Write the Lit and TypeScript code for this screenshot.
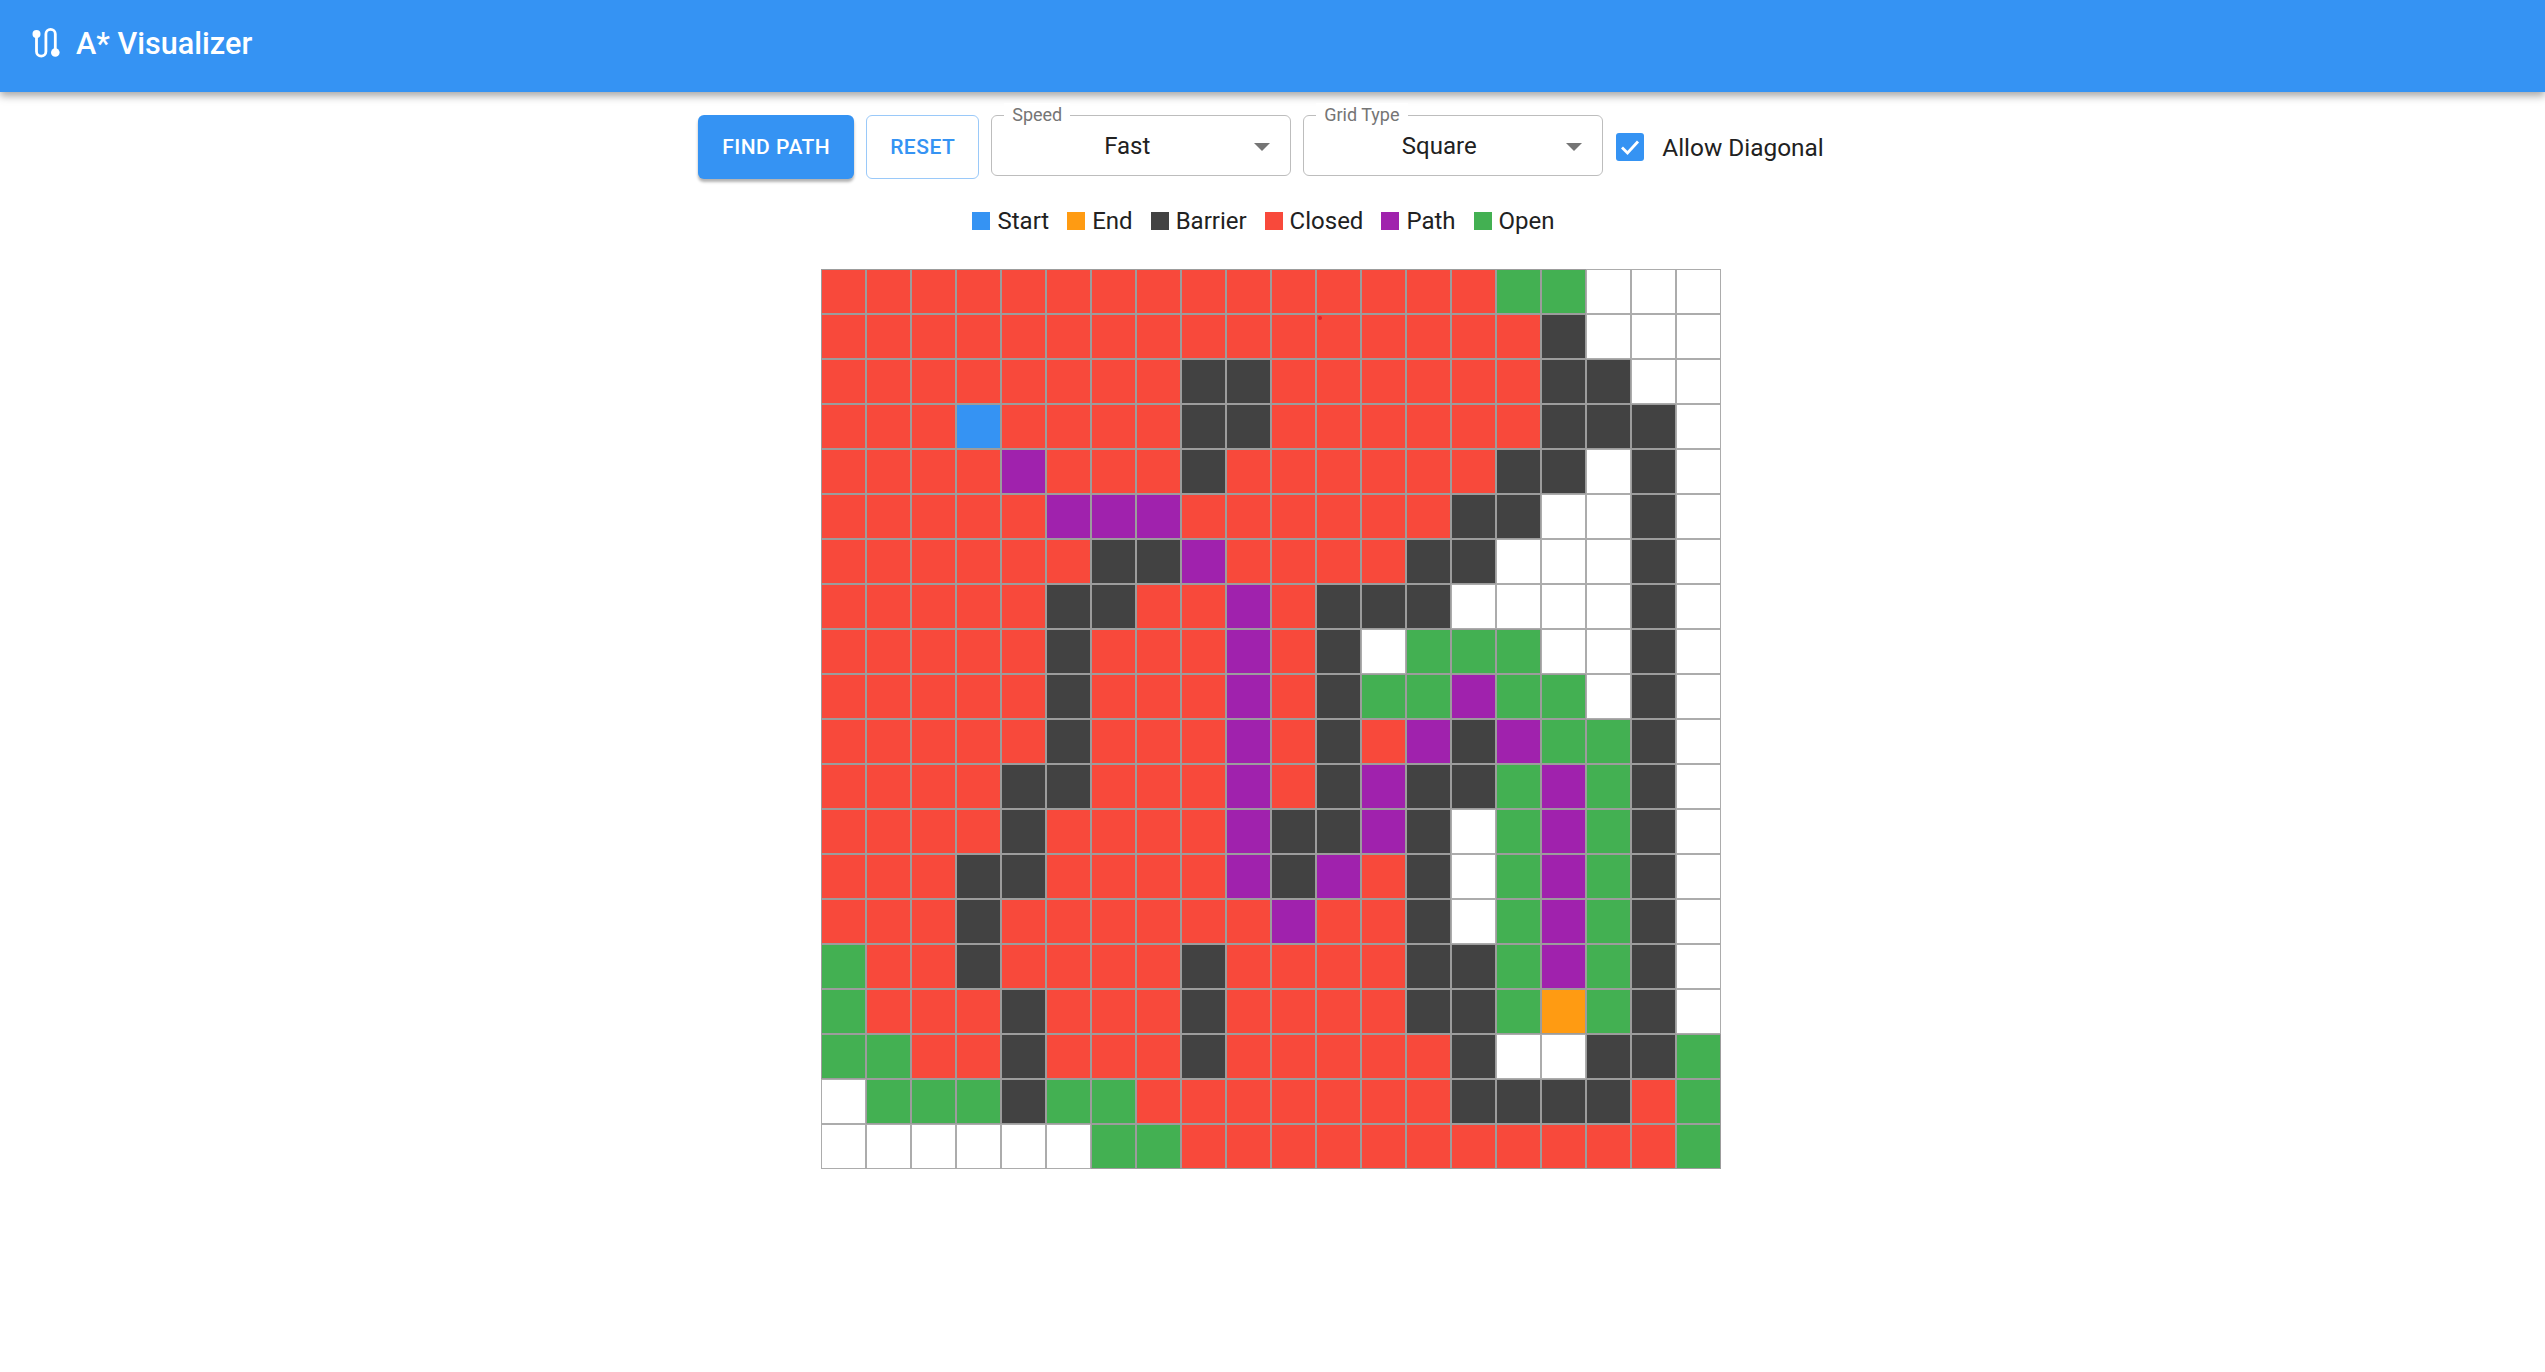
import { css, html, LitElement } from 'lit'
import { customElement } from 'lit/decorators.js'

const GRID_ROWS = [
  'CCCCCCCCCCCCCCCOOWWW',
  'CCCCCCCCCCCCCCCCBWWW',
  'CCCCCCCCBBCCCCCCBBWW',
  'CCCSCCCCBBCCCCCCBBBW',
  'CCCCPCCCBCCCCCCBBWBW',
  'CCCCCPPPCCCCCCBBWWBW',
  'CCCCCCBBPCCCCBBWWWBW',
  'CCCCCBBCCPCBBBWWWWBW',
  'CCCCCBCCCPCBWOOOWWBW',
  'CCCCCBCCCPCBOOPOOWBW',
  'CCCCCBCCCPCBCPBPOOBW',
  'CCCCBBCCCPCBPBBOPOBW',
  'CCCCBCCCCPBBPBWOPOBW',
  'CCCBBCCCCPBPCBWOPOBW',
  'CCCBCCCCCCPCCBWOPOBW',
  'OCCBCCCCBCCCCBBOPOBW',
  'OCCCBCCCBCCCCBBOEOBW',
  'OOCCBCCCBCCCCCBWWBBO',
  'WOOOBOOCCCCCCCBBBBCO',
  'WWWWWWOOCCCCCCCCCCCO',
]

const LEGEND = [
  { label: 'Start', type: 'S' },
  { label: 'End', type: 'E' },
  { label: 'Barrier', type: 'B' },
  { label: 'Closed', type: 'C' },
  { label: 'Path', type: 'P' },
  { label: 'Open', type: 'O' },
]

@customElement('app-root')
export class AppRoot extends LitElement {
  static styles = css`
    :host {
      display: block;
      min-height: 1372px;
      background: #fff;
      color: #212121;
      font-family: Roboto, 'Liberation Sans', sans-serif;
    }

    .app-bar {
      display: flex;
      align-items: center;
      gap: 13px;
      box-sizing: border-box;
      height: 92px;
      padding: 0 30px 5px;
      background: #3593f3;
      color: #fff;
      box-shadow: 0 4px 8px rgba(0, 0, 0, 0.35);
    }

    .app-bar svg {
      display: block;
      width: 33px;
      height: 34px;
    }

    .title {
      font-size: 30.6px;
      font-weight: 500;
    }

    main {
      display: flex;
      flex-direction: column;
      align-items: center;
    }

    .controls {
      display: flex;
      align-items: flex-start;
      gap: 12px;
      margin-top: 23px;
    }

    button {
      box-sizing: border-box;
      height: 64px;
      padding: 0;
      border-radius: 6px;
      font-family: inherit;
      font-size: 21px;
      font-weight: 500;
      letter-spacing: 0.5px;
    }

    .find {
      width: 156px;
      border: 0;
      background: #3593f3;
      color: #fff;
      box-shadow: 0 3px 3px rgba(0, 0, 0, 0.3);
    }

    .reset {
      width: 113px;
      border: 1px solid #9ac9f9;
      background: #fff;
      color: #3593f3;
    }

    .select {
      position: relative;
      box-sizing: border-box;
      display: flex;
      align-items: center;
      justify-content: center;
      width: 300px;
      height: 61px;
      padding-right: 28px;
      border: 1px solid #bdbdbd;
      border-radius: 6px;
      font-size: 24px;
    }

    .select label {
      position: absolute;
      top: -13px;
      left: 12px;
      padding: 0 8px;
      background: #fff;
      color: #757575;
      font-size: 18px;
      line-height: 24px;
    }

    .arrow {
      position: absolute;
      top: 27px;
      right: 20px;
      width: 0;
      height: 0;
      border-left: 8px solid transparent;
      border-right: 8px solid transparent;
      border-top: 8px solid #757575;
    }

    .toggle {
      display: flex;
      align-items: center;
      gap: 18px;
      height: 64px;
      margin-left: 1px;
      margin-right: 23px;
      font-size: 24.4px;
    }

    .box {
      display: block;
      width: 28px;
      height: 28px;
      border-radius: 3px;
      background: #3593f3;
    }

    .legend {
      display: flex;
      gap: 18px;
      height: 28px;
      margin-top: 28px;
      margin-bottom: 34px;
      font-size: 24px;
      line-height: 28px;
    }

    .legend-item {
      display: flex;
      align-items: center;
      gap: 7px;
    }

    .legend-item:last-child {
      margin-right: 18px;
    }

    .swatch {
      width: 18px;
      height: 18px;
    }

    .grid {
      position: relative;
      display: grid;
      grid-template-columns: repeat(20, 45px);
      grid-auto-rows: 45px;
      width: 900px;
      margin-right: 3px;
    }

    .cell {
      box-sizing: border-box;
      border: 1px solid #9c9c9c;
    }

    .W {
      background: #fff;
      border-color: #acacac;
    }
    .C {
      background: #f8493b;
    }
    .B {
      background: #424242;
    }
    .O {
      background: #43b052;
    }
    .P {
      background: #a022ad;
    }
    .S {
      background: #3593f3;
    }
    .E {
      background: #ff9b12;
    }

    .speck {
      position: absolute;
      left: 497px;
      top: 47px;
      width: 4px;
      height: 4px;
      border-radius: 50%;
      background: #e0232b;
    }
  `

  render() {
    return html`
      <header class="app-bar">
        <svg viewBox="0 0 33 34" fill="none" stroke="currentColor" stroke-width="2.8">
          <path d="M6.5 7V24.5a4.7 4.7 0 0 0 9.4 0V7a4.7 4.7 0 0 1 9.4 0V25" />
          <circle cx="6.5" cy="7" r="4" fill="currentColor" stroke="none" />
          <circle cx="25.3" cy="25.5" r="4.3" fill="currentColor" stroke="none" />
        </svg>
        <span class="title">A* Visualizer</span>
      </header>
      <main>
        <div class="controls">
          <button class="find">FIND PATH</button>
          <button class="reset">RESET</button>
          ${this.renderSelect('Speed', 'Fast')}
          ${this.renderSelect('Grid Type', 'Square')}
          <div class="toggle">
            <svg class="box" viewBox="0 0 28 28" fill="none" stroke="#fff" stroke-width="2.8">
              <path d="M6 14.5l5.5 5.5L22 8.5" />
            </svg>
            <span>Allow Diagonal</span>
          </div>
        </div>
        <div class="legend">
          ${LEGEND.map(
            (item) => html`
              <div class="legend-item">
                <span class="swatch ${item.type}"></span>${item.label}
              </div>
            `,
          )}
        </div>
        <div class="grid">
          ${GRID_ROWS.flatMap((row) =>
            [...row].map((type) => html`<div class="cell ${type}"></div>`),
          )}
          <span class="speck"></span>
        </div>
      </main>
    `
  }

  private renderSelect(label: string, value: string) {
    return html`
      <div class="select">
        <label>${label}</label>
        <span>${value}</span>
        <span class="arrow"></span>
      </div>
    `
  }
}
